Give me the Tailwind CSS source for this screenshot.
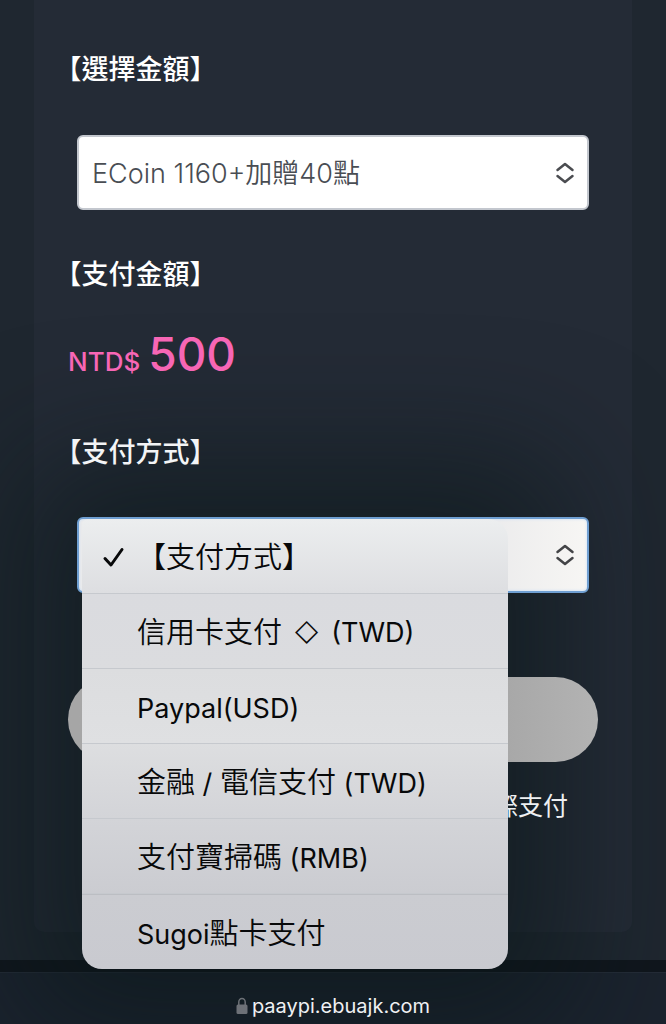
<!DOCTYPE html>
<html lang="zh-Hant">
<head>
<meta charset="utf-8">
<meta name="viewport" content="width=device-width, initial-scale=1">
<title>支付方式</title>
<script src="https://cdn.jsdelivr.net/npm/@tailwindcss/browser@4"></script>
</head>
<body class="flex min-h-screen flex-col overflow-x-hidden bg-[#1f2730] font-['Inter','Noto_Sans_CJK_TC',sans-serif]">
  <main class="px-[34px] pb-7">
    <form class="rounded-b-[10px] bg-[#242b36] px-[34px] pt-[52px] pb-[108px]">
      <label for="amount" class="relative z-10 block text-[27px] leading-9 font-medium text-white [text-spacing-trim:trim-start]">【選擇金額】</label>
      <div class="relative z-10 mx-[9px] mt-[47px]">
        <select id="amount" class="block h-[75px] w-full appearance-none rounded-md border-2 border-[#c3c7ce] bg-white pt-1 pr-14 pl-[13px] text-[27px] font-[350] text-[#494d53]">
          <option>ECoin 1160+加贈40點</option>
        </select>
        <svg class="pointer-events-none absolute top-[27px] right-[14px] h-[22px] w-5" viewBox="0 0 20 22" fill="none" stroke="#4a4c50" stroke-width="2.5" stroke-linecap="round" stroke-linejoin="round"><path d="M2.500 8 10 2 17.500 8M2.500 14 10 20 17.500 14"/></svg>
      </div>

      <h2 class="relative z-10 mt-[47px] text-[27px] leading-9 font-medium text-white [text-spacing-trim:trim-start]">【支付金額】</h2>
      <p class="relative z-10 mt-[33px] flex h-14 items-baseline gap-2 font-medium text-[#f766b5]">
        <span class="text-[26px]">NTD$</span><span class="text-[46px] leading-14">500</span>
      </p>

      <label for="method" class="relative z-10 mt-[53px] block text-[27px] leading-9 font-medium text-[#f3f4f6] [text-spacing-trim:trim-start]">【支付方式】</label>
      <div class="relative mx-[9px] mt-[46px]">
        <div class="pointer-events-none absolute top-0 left-[5px] h-[452px] w-[426px] rounded-[20px] shadow-[0_0_120px_60px_rgba(10,22,24,0.55)]"></div>
        <select id="method" class="relative z-10 block h-19 w-full appearance-none rounded-md border-2 border-[#6f9fd2] bg-linear-to-r from-[#ebebec] from-80% to-[#f7f6f4] pr-14 pl-[13px] text-[27px] text-transparent inset-shadow-[0_0_3px_#c4dcf8]">
          <option>【支付方式】</option>
        </select>
        <svg class="pointer-events-none absolute top-[27px] right-[14px] z-10 h-[22px] w-5" viewBox="0 0 20 22" fill="none" stroke="#434447" stroke-width="2.5" stroke-linecap="round" stroke-linejoin="round"><path d="M2.500 8 10 2 17.500 8M2.500 14 10 20 17.500 14"/></svg>

        <div class="absolute top-0.5 left-[5px] z-20 flex w-[426px] flex-col divide-y divide-[#c6c9ce] overflow-hidden rounded-[20px] rounded-tl-md text-[29px] font-[350] text-[#08090a]">
          <button type="button" class="flex h-[75px] items-center bg-linear-to-b from-[#eceeef] to-[#dddee1] pt-1 pl-5 text-left">
            <svg class="mr-3 h-6 w-[23px] shrink-0" viewBox="0 0 23 24" fill="none" stroke="#08090a" stroke-width="3" stroke-linecap="round" stroke-linejoin="round"><path d="M3 12.500 9 19 20 3.500"/></svg>
            【支付方式】
          </button>
          <button type="button" class="flex h-[75px] items-center gap-3 bg-linear-to-b from-[#dadbdf] to-[#dbdcdf] pt-1 pl-[55px] text-left">信用卡支付<span class="text-[24px] font-light">◇</span><span class="text-[27px] font-normal">(TWD)</span></button>
          <button type="button" class="h-[75px] bg-linear-to-b from-[#dcdddf] to-[#dfe0e2] pt-1 pl-[55px] text-left"><span class="text-[27px] font-normal">Paypal(USD)</span></button>
          <button type="button" class="h-[75px] bg-linear-to-b from-[#dddee0] to-[#d3d4d8] pt-1 pl-[55px] text-left">金融<span class="text-[27px] font-normal"> / </span>電信支付<span class="text-[27px] font-normal"> (TWD)</span></button>
          <button type="button" class="h-[75px] bg-linear-to-b from-[#d3d4d8] to-[#cbccd1] pt-1 pl-[55px] text-left">支付寶掃碼<span class="text-[27px] font-normal"> (RMB)</span></button>
          <button type="button" class="h-[75px] border-t border-[#bcbec3] bg-linear-to-b from-[#cbccd1] to-[#c9cad0] pt-1 pl-[55px] text-left"><span class="text-[27px] font-normal">Sugoi</span>點卡支付</button>
        </div>
      </div>

      <button type="submit" aria-label="支付" class="relative z-10 mt-21 block h-[85px] w-full rounded-full bg-linear-to-r from-[#a6a6a6] from-80% to-[#b3b3b3]"></button>
      <p class="relative z-10 mt-[26px] pr-[30px] text-right text-[25px] leading-9 text-[#eef0f2]">際支付</p>
    </form>
  </main>
  <div class="h-3 bg-[#10161d]"></div>
  <footer class="flex grow items-end justify-center border-t border-[#242c37] bg-[#1b232e] pb-1">
    <a href="#" class="relative z-10 flex items-center gap-1 text-[20px] leading-7 text-[#eff1f3]">
      <svg class="h-[18px] w-3" viewBox="0 0 12 18"><rect x="0.500" y="7.500" width="11" height="9.500" rx="1.500" fill="#6d7177"/><path d="M2.800 8V5a3.200 3.600 0 0 1 6.400 0v3" fill="none" stroke="#6d7177" stroke-width="1.500"/></svg>
      paaypi.ebuajk.com
    </a>
  </footer>
</body>
</html>
